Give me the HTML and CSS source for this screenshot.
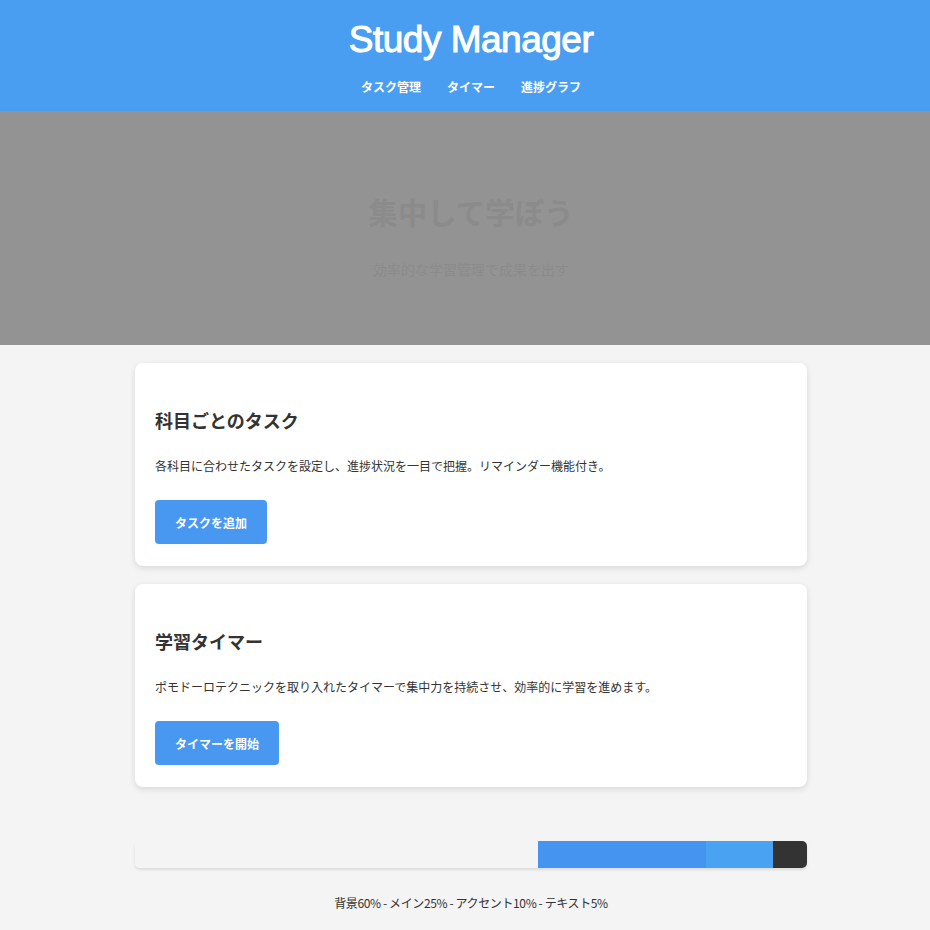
FILE: index.html
```html
<!DOCTYPE html>
<html lang="ja">
<head>
  <meta charset="UTF-8" />
  <meta name="viewport" content="width=device-width, initial-scale=1.0"/>
  <title>Study Manager</title>
  <link rel="stylesheet" href="styles.css">
</head>
<body>

  <header class="site-header">
    <h1>Study Manager</h1>
    <nav class="nav">
      <a href="#">タスク管理</a>
      <a href="#">タイマー</a>
      <a href="#">進捗グラフ</a>
    </nav>
  </header>

  <section class="hero">
    <h2>集中して学ぼう</h2>
    <p>効率的な学習管理で成果を出す</p>
  </section>

  <main class="container">
    <div class="card">
      <h3>科目ごとのタスク</h3>
      <p>各科目に合わせたタスクを設定し、進捗状況を一目で把握。リマインダー機能付き。</p>
      <button class="btn">タスクを追加</button>
    </div>

    <div class="card">
      <h3>学習タイマー</h3>
      <p>ポモドーロテクニックを取り入れたタイマーで集中力を持続させ、効率的に学習を進めます。</p>
      <button class="btn">タイマーを開始</button>
    </div>

    <div class="color-bar">
      <div class="seg bg" style="width: 60%"></div>
      <div class="seg main" style="width: 25%"></div>
      <div class="seg accent" style="width: 10%"></div>
      <div class="seg text" style="width: 5%"></div>
    </div>
    <p class="caption">背景60% - メイン25% - アクセント10% - テキスト5%</p>
  </main>

</body>
</html>
```

FILE: styles.css
```css
body {
  margin: 0;
  background: #f4f4f4;
  color: #333;
  font-family: "Noto Sans CJK JP", "Liberation Sans", sans-serif;
}

.site-header {
  background: #4a9ef2;
  color: white;
  text-align: center;
  height: 111px;
  padding: 18px 0 0 12px;
  box-sizing: border-box;
}

.site-header h1 {
  margin: 0;
  font-family: "Liberation Sans", "Noto Sans CJK JP", sans-serif;
  font-size: 37px;
  font-weight: normal;
  letter-spacing: -0.5px;
  -webkit-text-stroke: 1px white;
  line-height: 44px;
}

.nav {
  display: flex;
  justify-content: center;
  gap: 26px;
  margin-top: 16px;
}

.nav a {
  color: white;
  text-decoration: none;
  font-size: 12px;
  font-weight: bold;
}

.hero {
  background: #939393;
  height: 234px;
  text-align: center;
  padding: 78px 0 0 12px;
  box-sizing: border-box;
}

.hero h2 {
  margin: 0;
  font-size: 29.5px;
  line-height: 44px;
  color: #8b8b8b;
}

.hero p {
  margin: 26px 0 0;
  font-size: 14px;
  color: #8b8b8b;
}

.container {
  width: 672px;
  margin: 18px 0 0 calc(50% - 330px);
}

.card {
  background: white;
  border-radius: 8px;
  box-shadow: 0 2px 6px rgba(0,0,0,0.12);
  padding: 42px 20px 22px;
  margin-bottom: 18px;
}

.card h3 {
  margin: 0;
  font-size: 18px;
  line-height: 30px;
  color: #333;
}

.card p {
  margin: 20px 0 23px;
  font-size: 12px;
  line-height: 22px;
}

.btn {
  background: #4897f0;
  color: white;
  border: none;
  border-radius: 4px;
  height: 44px;
  padding: 0 20px;
  font-family: inherit;
  font-size: 12px;
  font-weight: bold;
}

.color-bar {
  display: flex;
  height: 27px;
  margin-top: 54px;
  border-radius: 5px;
  overflow: hidden;
  box-shadow: 0 2px 3px rgba(0,0,0,0.1);
}

.seg.bg { background: #f4f4f4; }
.seg.main { background: #4595f0; }
.seg.accent { background: #4aa3f2; }
.seg.text { background: #333; }

.caption {
  text-align: center;
  font-size: 12px;
  letter-spacing: -0.38px;
  margin: 26px 0 0;
}
```
